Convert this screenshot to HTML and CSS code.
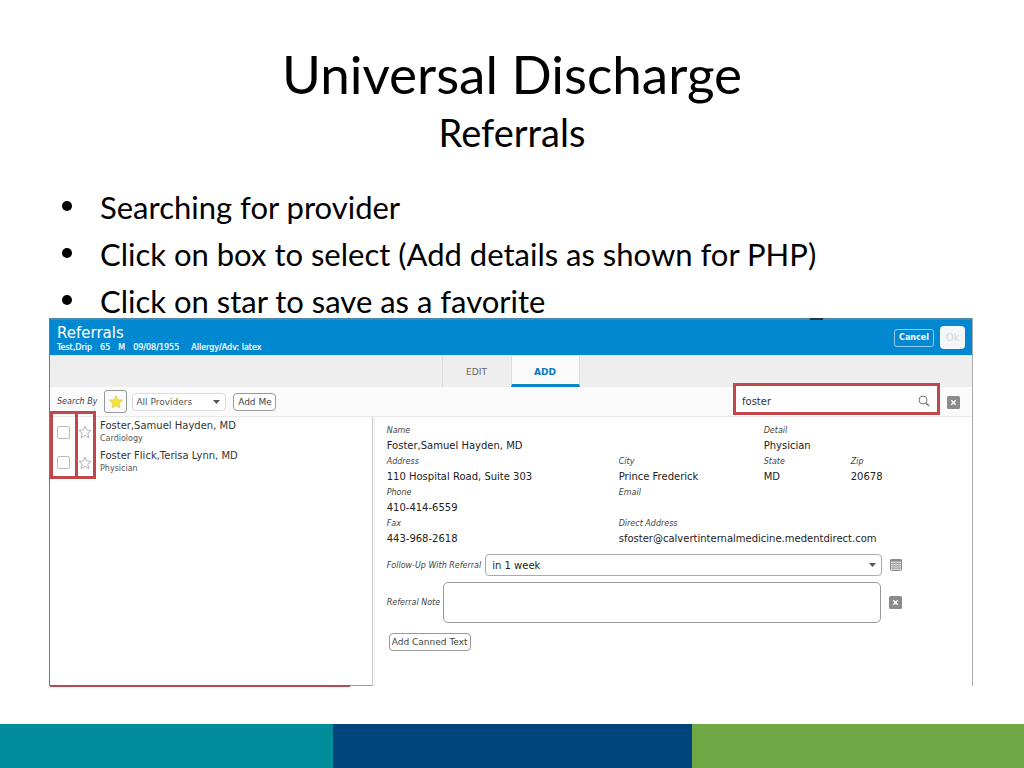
FILE: index.html
```html
<!DOCTYPE html>
<html lang="en">
<head>
<meta charset="utf-8">
<title>Universal Discharge - Referrals</title>
<link rel="stylesheet" href="styles.css">
</head>
<body>
<div class="slide">
  <header class="heading">
    <h1 class="title">Universal Discharge</h1>
    <p class="subtitle">Referrals</p>
  </header>
  <ul class="bullets">
    <li>Searching for provider</li>
    <li>Click on box to select (Add details as shown for PHP)</li>
    <li>Click on star to save as a favorite</li>
  </ul>
  <main class="app">
    <div class="top-edge"><span class="edge-mark"></span></div>
    <div class="app-bar">
      <div class="patient">
        <h2 class="app-title">Referrals</h2>
        <p class="patient-line"><span>Test,Drip</span><span>65</span><span>M</span><span>09/08/1955</span><span class="allergy">Allergy/Adv: latex</span></p>
      </div>
      <button class="cancel" type="button">Cancel</button>
      <button class="ok" type="button" disabled>Ok</button>
    </div>
    <nav class="tabs">
      <button class="tab" type="button">EDIT</button>
      <button class="tab tab-active" type="button">ADD</button>
    </nav>
    <div class="search-bar">
      <label class="label" for="by">Search By</label>
      <button class="fav-button" type="button" aria-label="Favorites">
        <svg width="14" height="14" viewBox="0 0 14 14"><path d="M7 .6 8.9 4.8 13.5 5.3 10.1 8.4 11 13 7 10.7 3 13 3.9 8.4.5 5.3 5.1 4.8Z" fill="#f7e23c" stroke="#d9cb5a" stroke-width=".7"/></svg>
      </button>
      <span class="select-wrap by-wrap">
        <select id="by" class="by"><option>All Providers</option></select>
        <svg class="caret" width="7" height="4" viewBox="0 0 7 4"><path d="M0 0h7L3.5 4Z" fill="#555"/></svg>
      </span>
      <button class="small-button" type="button">Add Me</button>
      <div class="search-box">
        <input class="search" type="text" value="foster" aria-label="Search providers">
        <svg width="12" height="12" viewBox="0 0 12 12" fill="none" stroke="#777"><circle cx="5" cy="5" r="4"/><path d="m8 8 3 3" stroke-width="1.6"/></svg>
      </div>
      <button class="clear" type="button" aria-label="Clear search"><svg width="13" height="13" viewBox="0 0 13 13"><rect width="13" height="13" rx="1.5" fill="#8b8b8b"/><path d="m4.3 4.3 4.4 4.4m0-4.4L4.3 8.7" stroke="#fff" stroke-width="1.4"/></svg></button>
    </div>
    <div class="content">
      <section class="results">
        <div class="result">
          <input class="tick" type="checkbox" id="r1">
          <button class="star" type="button" aria-label="Save as favorite"><svg width="14" height="14" viewBox="0 0 14 14"><path d="M7 1 8.7 5 13 5.4 9.8 8.2 10.8 12.7 7 10.4 3.2 12.7 4.2 8.2 1 5.4 5.3 5Z" fill="#fff" stroke="#aaa" stroke-width=".9"/></svg></button>
          <label class="provider" for="r1"><span class="name">Foster,Samuel Hayden, MD</span><span class="role">Cardiology</span></label>
        </div>
        <div class="result">
          <input class="tick" type="checkbox" id="r2">
          <button class="star" type="button" aria-label="Save as favorite"><svg width="14" height="14" viewBox="0 0 14 14"><path d="M7 1 8.7 5 13 5.4 9.8 8.2 10.8 12.7 7 10.4 3.2 12.7 4.2 8.2 1 5.4 5.3 5Z" fill="#fff" stroke="#aaa" stroke-width=".9"/></svg></button>
          <label class="provider" for="r2"><span class="name">Foster Flick,Terisa Lynn, MD</span><span class="role">Physician</span></label>
        </div>
        <div class="marker marker-ticks"></div>
        <div class="marker marker-stars"></div>
      </section>
      <section class="details">
        <dl class="fields">
          <div class="wide"><dt>Name</dt><dd>Foster,Samuel Hayden, MD</dd></div>
          <div class="rest"><dt>Detail</dt><dd>Physician</dd></div>
          <div><dt>Address</dt><dd>110 Hospital Road, Suite 303</dd></div>
          <div><dt>City</dt><dd>Prince Frederick</dd></div>
          <div><dt>State</dt><dd>MD</dd></div>
          <div><dt>Zip</dt><dd>20678</dd></div>
          <div><dt>Phone</dt><dd>410-414-6559</dd></div>
          <div class="rest"><dt>Email</dt><dd></dd></div>
          <div><dt>Fax</dt><dd>443-968-2618</dd></div>
          <div class="rest"><dt>Direct Address</dt><dd>sfoster@calvertinternalmedicine.medentdirect.com</dd></div>
        </dl>
        <div class="form-row follow-row">
          <label class="label" for="follow">Follow-Up With Referral</label>
          <span class="select-wrap follow-wrap">
            <select id="follow" class="follow"><option>in 1 week</option></select>
            <svg class="caret" width="7" height="4" viewBox="0 0 7 4"><path d="M0 0h7L3.5 4Z" fill="#555"/></svg>
          </span>
          <button class="icon-button" type="button" aria-label="Pick a date"><svg width="12" height="12" viewBox="0 0 12 12"><rect x=".5" y=".5" width="11" height="11" rx="1" fill="#eee" stroke="#888"/><path d="M0 1.5h12" stroke="#888" stroke-width="2"/><path d="M3.2 2v9M6 2v9M8.8 2v9M1 4.5h10M1 6.8h10M1 9.1h10" stroke="#999" stroke-width=".9"/></svg></button>
        </div>
        <div class="form-row">
          <label class="label" for="note">Referral Note</label>
          <textarea id="note" class="note"></textarea>
          <button class="icon-button" type="button" aria-label="Clear note"><svg width="13" height="13" viewBox="0 0 13 13"><rect width="13" height="13" rx="1.5" fill="#8b8b8b"/><path d="m4.3 4.3 4.4 4.4m0-4.4L4.3 8.7" stroke="#fff" stroke-width="1.4"/></svg></button>
        </div>
        <button class="small-button canned" type="button">Add Canned Text</button>
      </section>
    </div>
  </main>
  <footer class="stripes"><span class="teal"></span><span class="navy"></span><span class="green"></span></footer>
</div>
</body>
</html>
```
FILE: styles.css
```css
* { box-sizing: border-box; }
body { margin: 0; background: #fff; color: #000; font-family: "DejaVu Sans", sans-serif; }
button, input, select, textarea { font: inherit; color: inherit; margin: 0; padding: 0; }
button { background: none; border: 0; display: flex; align-items: center; justify-content: center; }
h1, h2, p, ul, dl, dd { margin: 0; padding: 0; font-weight: 400; }
svg { display: block; flex: none; }

.slide { min-height: 100vh; display: flex; flex-direction: column; }
.heading { padding-top: 42px; text-align: center; font-family: Lato, sans-serif; }
.title { font-size: 53px; line-height: 64px; }
.subtitle { font-size: 38px; line-height: 52px; }
.bullets { margin-top: 26px; padding-left: 62px; list-style: none; font: 31px/47px Lato, sans-serif; }
.bullets li { display: flex; align-items: center; }
.bullets li::before { content: ""; width: 10px; height: 10px; margin: 0 28px 4px 0; border-radius: 50%; background: #000; }

.app { flex: 1; display: flex; flex-direction: column; margin: -7px 51px 38px 49px; border-left: 1px solid #777; border-right: 1px solid #aaa; }
.top-edge { display: flex; justify-content: flex-end; height: 2px; background: #4b86ab; }
.edge-mark { width: 13px; margin-right: 149px; background: #234; }

.app-bar { display: flex; align-items: center; gap: 6px; min-height: 35px; padding: 0 7px; background: #0288d1; color: #fff; }
.patient { flex: 1; padding-top: 2px; }
.app-title { font-size: 15px; line-height: 18px; }
.patient-line { display: flex; gap: 8px; font-size: 8px; line-height: 11px; -webkit-text-stroke: 0.2px #fff; }
.allergy { margin-left: 4px; }
.cancel { width: 40px; height: 18px; border: 1px solid #8fcdf0; border-radius: 3px; font-size: 8px; font-weight: 700; }
.ok { width: 25px; height: 23px; border-radius: 4px; background: #f4f7f9; color: #d3d8dc; font-size: 10px; }

.tabs { display: flex; justify-content: center; height: 32px; padding-right: 1px; background: #eee; border-top: 1px solid #d8e8f0; }
.tab { width: 69px; border-left: 1px solid #ddd; color: #666; font-size: 9px; }
.tab-active { border-right: 1px solid #ddd; border-bottom: 3px solid #0a86c4; padding-top: 3px; background: #fafafa; color: #0a78bd; font-weight: 700; }

.search-bar { display: flex; align-items: center; height: 30px; padding: 0 12px 0 7px; background: #fafafa; border-bottom: 1px solid #e8e8e8; font-size: 8px; color: #444; }
.label { font-size: 8px; font-style: oblique; color: #444; white-space: nowrap; }
.fav-button { width: 23px; height: 23px; margin-left: 7px; border: 1px solid #999; border-radius: 3px; }
.select-wrap { display: flex; align-items: center; position: relative; }
.select-wrap select { appearance: none; width: 100%; height: 100%; background: #fff; border: 1px solid #ddd; border-radius: 4px; }
.caret { position: absolute; right: 6px; pointer-events: none; }
.by-wrap { width: 94px; height: 18px; margin: 0 7px 0 5px; }
.by-wrap select { padding-left: 3px; font-size: 9px; color: #555; }
.small-button { width: 43px; height: 18px; border: 1px solid #999; border-radius: 4px; background: #fff; color: #444; font-size: 9px; white-space: nowrap; }
.search-box { display: flex; align-items: center; width: 207px; height: 32px; margin: -6px 7px 0 auto; padding: 5px 7px 0 6px; border: 3px solid #c0474a; background: #fff; }
.search { flex: 1; min-width: 0; border: 0; background: none; outline: 0; color: #333; font-size: 10px; }
.clear { margin-top: 2px; }

.content { flex: 1; display: grid; grid-template-columns: 35fr 65fr; }
.results { position: relative; padding: 0 0 0 7px; border-right: 1px solid #ccc; border-bottom: 1px solid #999; }
.results::after { content: ""; position: absolute; left: 0; bottom: -2px; width: 300px; height: 2px; background: #b8474f; }
.result { display: flex; align-items: center; height: 30px; }
.result + .result { height: 31px; }
.tick { appearance: none; width: 13px; height: 13px; border: 1px solid #bbb; border-radius: 2px; background: #fff; }
.star { margin: 0 8px; }
.provider { display: flex; flex-direction: column; padding-bottom: 2px; color: #333; }
.name { font-size: 10px; line-height: 14px; }
.role { font-size: 8px; line-height: 11px; color: #555; }
.marker { position: absolute; top: -6px; height: 68px; border: 3px solid #c0474a; pointer-events: none; }
.marker-ticks { left: 0; width: 28px; }
.marker-stars { left: 25px; width: 21px; }

.details { padding: 7px 70px 0 12px; border-left: 1px solid #eee; margin-left: 1px; }
.fields { display: grid; grid-template-columns: 232px 145px 87px 1fr; row-gap: 1px; margin-right: -60px; }
.wide { grid-column: span 2; }
.rest { grid-column-end: -1; grid-column-start: span 3; }
.wide + .rest { grid-column-start: span 2; }
.fields dt { font-size: 8px; line-height: 14px; font-style: oblique; color: #444; }
.fields dd { min-height: 16px; font-size: 10px; line-height: 16px; color: #222; }
.form-row { display: flex; align-items: center; margin-top: 6px; }
.follow-row { margin-top: 7px; }
.follow-wrap { flex: 1; height: 22px; margin-left: 4px; }
.follow-wrap select { padding-left: 6px; border-color: #aaa; font-size: 10px; color: #222; }
.icon-button { margin-left: 8px; }
.note { flex: 1; height: 41px; margin-left: 3px; border: 1px solid #999; border-radius: 5px; resize: none; font-size: 10px; }
.canned { width: 82px; margin: 10px 0 0 2px; }

.stripes { display: flex; height: 44px; }
.teal { flex: 333; background: #008c9b; }
.navy { flex: 359; background: #00457c; }
.green { flex: 332; background: #6fa844; }
```
